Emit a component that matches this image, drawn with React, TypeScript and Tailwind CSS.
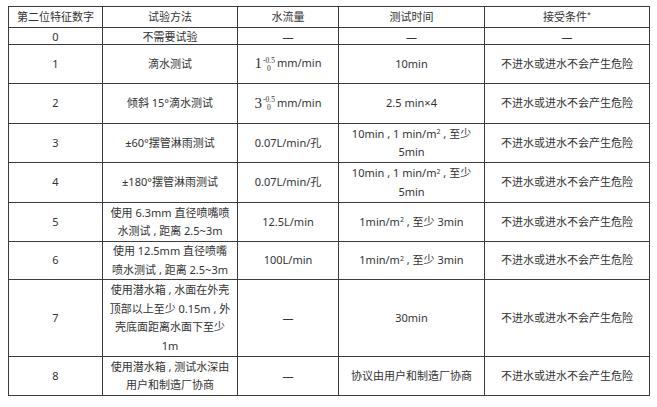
import React from "react"

// Stacked tolerance: base value with upper/lower deviation
function Tol({ base }: { base: string }) {
  return (
    <span className="inline-flex items-center">
      <span className="font-['Liberation_Serif',serif] text-[15px] leading-[15px]">{base}</span>
      <span className="inline-flex flex-col items-start leading-[8px] text-[7.5px] font-['Liberation_Serif',serif] ml-[1px] mr-[2px] mt-[2px]">
        <span>-0.5</span>
        <span className="ml-[4px]">0</span>
      </span>
      <span>mm/min</span>
    </span>
  )
}

function Sq() {
  return <sup className="text-[7px]">2</sup>
}

type Row = {
  h: string
  digit: string
  method: React.ReactNode
  flow: React.ReactNode
  time: React.ReactNode
  accept: React.ReactNode
}

const OK = "不进水或进水不会产生危险"

const rows: Row[] = [
  { h: "h-[17px] leading-[15px]", digit: "0", method: "不需要试验", flow: "—", time: "—", accept: "—" },
  { h: "h-[39px]", digit: "1", method: "滴水测试", flow: <Tol base="1" />, time: "10min", accept: OK },
  { h: "h-[40px]", digit: "2", method: "倾斜 15°滴水测试", flow: <Tol base="3" />, time: "2.5 min×4", accept: OK },
  {
    h: "h-[39px]",
    digit: "3",
    method: "±60°摆管淋雨测试",
    flow: "0.07L/min/孔",
    time: (
      <>
        10min , 1 min/m<Sq /> , 至少<br />5min
      </>
    ),
    accept: OK,
  },
  {
    h: "h-[40px]",
    digit: "4",
    method: "±180°摆管淋雨测试",
    flow: "0.07L/min/孔",
    time: (
      <>
        10min , 1 min/m<Sq /> , 至少<br />5min
      </>
    ),
    accept: OK,
  },
  {
    h: "h-[39px]",
    digit: "5",
    method: (
      <>
        使用 6.3mm 直径喷嘴喷<br />水测试 , 距离 2.5~3m
      </>
    ),
    flow: "12.5L/min",
    time: (
      <>
        1min/m<Sq /> , 至少 3min
      </>
    ),
    accept: OK,
  },
  {
    h: "h-[38px]",
    digit: "6",
    method: (
      <>
        使用 12.5mm 直径喷嘴<br />喷水测试 , 距离 2.5~3m
      </>
    ),
    flow: "100L/min",
    time: (
      <>
        1min/m<Sq /> , 至少 3min
      </>
    ),
    accept: OK,
  },
  {
    h: "h-[77px]",
    digit: "7",
    method: (
      <>
        使用潜水箱 , 水面在外壳<br />顶部以上至少 0.15m , 外<br />壳底面距离水面下至少<br />1m
      </>
    ),
    flow: "—",
    time: "30min",
    accept: OK,
  },
  {
    h: "h-[39px]",
    digit: "8",
    method: (
      <>
        使用潜水箱 , 测试水深由<br />用户和制造厂协商
      </>
    ),
    flow: "—",
    time: "协议由用户和制造厂协商",
    accept: OK,
  },
]

const cell = "border border-[#3c3c3c] text-center align-middle p-0"

export default function App() {
  return (
    <div className="w-[657px] h-[407px] bg-white pt-[6px] pl-[8px] font-['Noto_Sans','Noto_Sans_CJK_SC',sans-serif] text-[11px] leading-[18.5px] text-[#333]">
      <table className="table-fixed border-collapse w-[641px]">
        <colgroup>
          <col className="w-[94px]" />
          <col className="w-[135px]" />
          <col className="w-[101px]" />
          <col className="w-[146px]" />
          <col className="w-[165px]" />
        </colgroup>
        <thead>
          <tr className="h-[21px]">
            <th className={`${cell} font-normal`}>第二位特征数字</th>
            <th className={`${cell} font-normal`}>试验方法</th>
            <th className={`${cell} font-normal`}>水流量</th>
            <th className={`${cell} font-normal`}>测试时间</th>
            <th className={`${cell} font-normal`}>
              接受条件<sup className="text-[7px]">*</sup>
            </th>
          </tr>
        </thead>
        <tbody>
          {rows.map((r) => (
            <tr key={r.digit} className={r.h}>
              <td className={cell}>{r.digit}</td>
              <td className={cell}>{r.method}</td>
              <td className={cell}>{r.flow}</td>
              <td className={cell}>{r.time}</td>
              <td className={cell}>{r.accept}</td>
            </tr>
          ))}
        </tbody>
      </table>
    </div>
  )
}
